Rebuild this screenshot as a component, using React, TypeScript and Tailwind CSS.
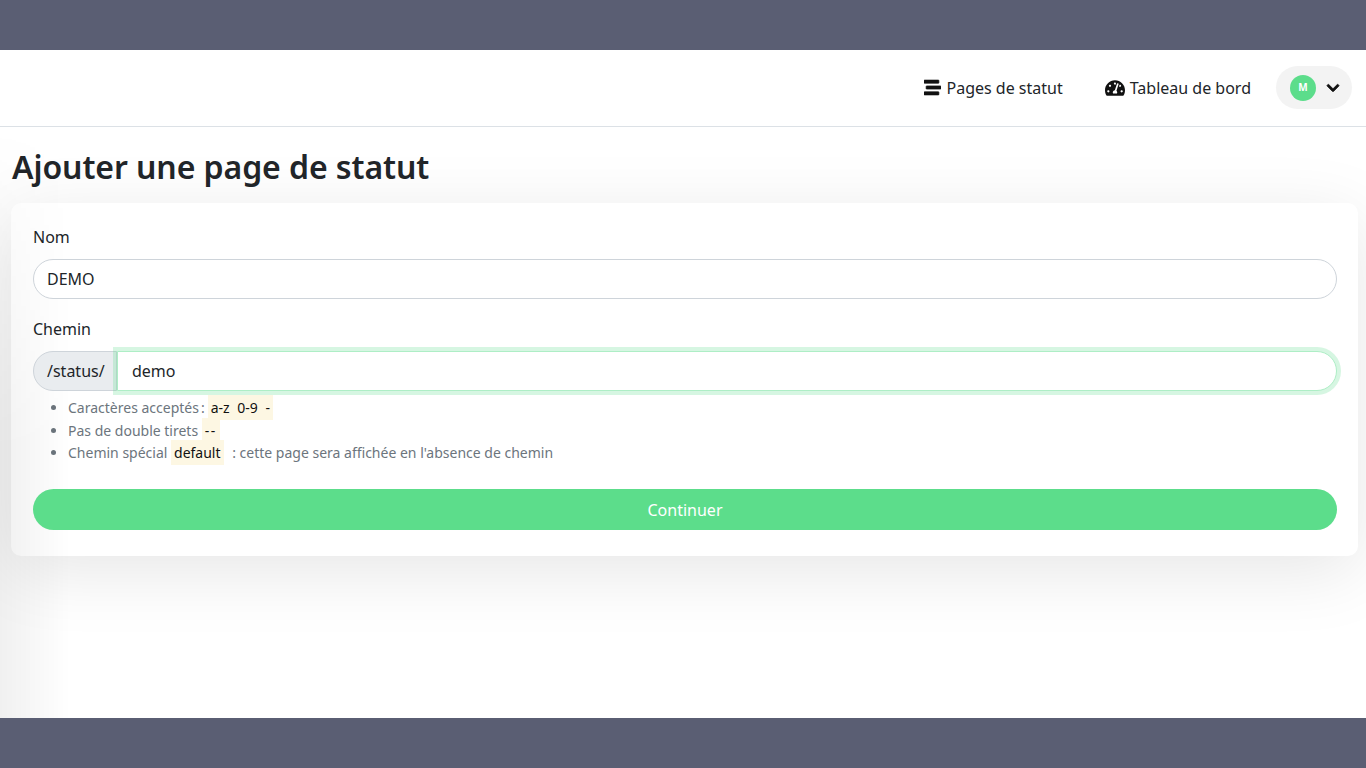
import { FaStream, FaTachometerAlt, FaChevronDown } from 'react-icons/fa'

const Code = ({ children, className = '' }: { children: React.ReactNode; className?: string }) => (
  <span className={`bg-[#fdf7e3] text-[#111] px-[3px] py-[3px] text-[14px] ${className}`}>{children}</span>
)

const App = () => {
  return (
    <div className="h-screen flex flex-col overflow-hidden bg-white text-[#212529] font-['Noto_Sans','Open_Sans',sans-serif]">
      <div className="h-[50px] shrink-0 bg-[#5a5e73]" />

      {/* Header */}
      <header className="h-[77px] shrink-0 bg-white border-b border-[#dce1e6] flex items-center justify-end pr-[14px] pb-[1px]">
        <a className="flex items-center gap-[5px] text-[16px] mr-[42px]">
          <FaStream className="w-[17px] h-[17px] text-[#111] stroke-current stroke-[20px]" />
          Pages de statut
        </a>
        <a className="flex items-center gap-[5px] text-[16px] mr-[25px]">
          <FaTachometerAlt className="w-5 h-[18px] text-[#111]" />
          Tableau de bord
        </a>
        <div className="w-[76px] h-[43px] rounded-full bg-[#f3f3f3] flex items-center pl-[14px]">
          <div className="w-[26px] h-[26px] rounded-full bg-[#5cdd8b] text-white text-[10px] font-bold flex items-center justify-center">M</div>
          <FaChevronDown className="w-[14px] h-[14px] ml-[10px] text-[#111] stroke-current stroke-[30px]" />
        </div>
      </header>

      {/* Main */}
      <main className="relative flex-1 min-h-0 overflow-hidden pl-[11px] pr-[8px] bg-white">
        <h1 className="text-[32px] leading-[38px] font-semibold tracking-[-0.08px] mt-[21px] mb-[17px] pl-[1px]">Ajouter une page de statut</h1>

        <div className="h-[353px] bg-white rounded-[10px] shadow-[0_15px_70px_rgba(0,0,0,0.1)] pl-[22px] pr-[21px] pt-[22px]">
          <label className="block text-[16px] leading-6 mb-[10px]">Nom</label>
          <div className="relative z-10 h-[40px] rounded-full border border-[#ced4da] bg-white flex items-center pl-[13px] text-[16px]">DEMO</div>

          <label className="block text-[16px] leading-6 mt-[18px] mb-[10px]">Chemin</label>
          <div className="relative z-10 flex h-[40px]">
            <span className="w-[84px] shrink-0 rounded-l-full border border-[#ced4da] bg-[#e9ecef] flex items-center pl-[13px] text-[16px]">/status/</span>
            <div className="flex-1 rounded-r-full border border-[#aeeec6] bg-white shadow-[0_0_0_4px_rgba(92,221,139,0.25)] flex items-center pl-[14px] text-[16px]">demo</div>
          </div>

          <ul className="list-disc pl-[35px] mt-[6px] text-[14px] leading-[22.5px] text-[#6c757d] marker:text-[#6c757d]">
            <li>Caractères acceptés<span className="ml-[2px] mr-[3px]">:</span><Code className="[word-spacing:4px]">a-z 0-9 -</Code></li>
            <li>Pas de double tirets <Code className="tracking-[1.5px]">--</Code></li>
            <li>Chemin spécial <Code>default</Code> <span className="ml-[5px]">: cette page sera affichée en l'absence de chemin</span></li>
          </ul>

          <button className="relative z-10 w-full h-[41px] mt-[24px] pt-[1px] rounded-full bg-[#5cdd8b] text-white text-[16px] block">Continuer</button>
        </div>

        <div className="absolute inset-y-0 left-0 w-[70px] pointer-events-none bg-gradient-to-r from-[#0000000f] to-transparent [mask-image:linear-gradient(to_bottom,transparent,black_55%)]" />
      </main>

      <div className="h-[50px] shrink-0 bg-[#5a5e73]" />
    </div>
  )
}

export default App
